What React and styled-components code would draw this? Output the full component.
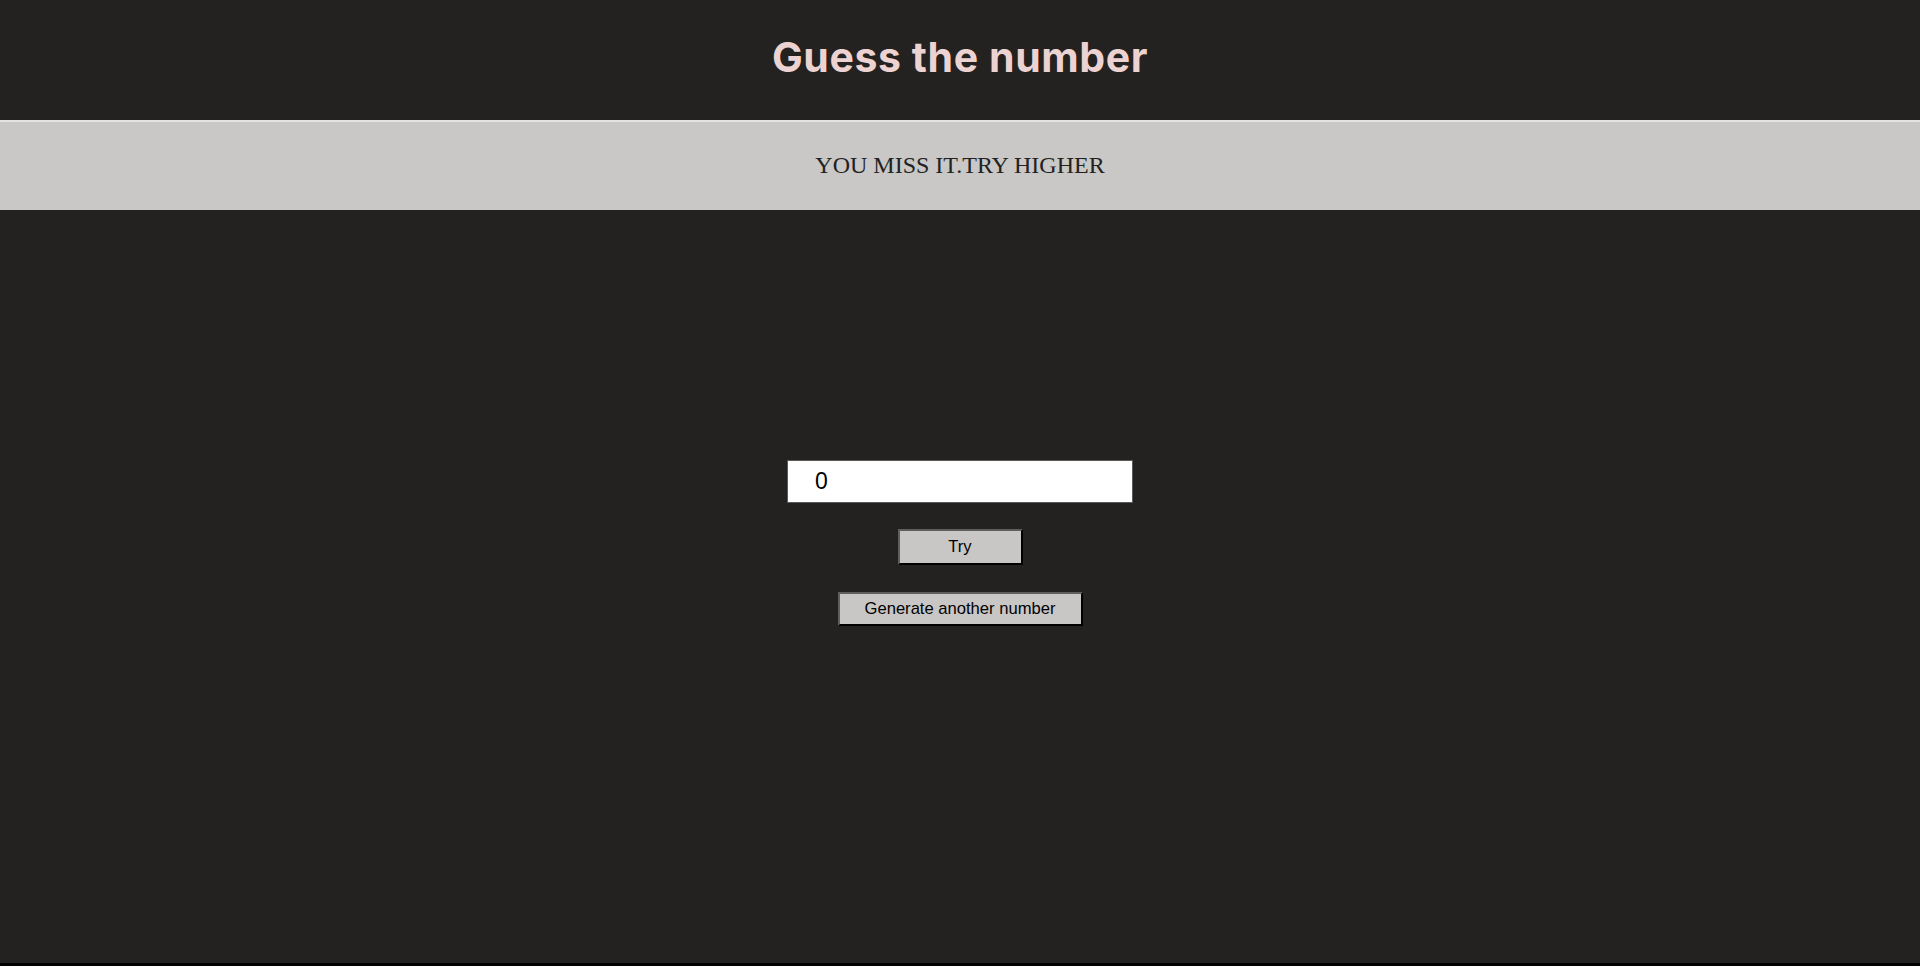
import React, { useState } from "react";
import styled, { createGlobalStyle } from "styled-components";

const GlobalStyle = createGlobalStyle`
  html, body {
    margin: 0;
    padding: 0;
    background: #000;
  }
`;

const App = () => {
  const [value, setValue] = useState("0");

  return (
    <>
      <GlobalStyle />
      <Page>
        <Header>
          <Title>Guess the number</Title>
        </Header>
        <Banner>YOU MISS IT.TRY HIGHER</Banner>
        <Main>
          <Form onSubmit={e => e.preventDefault()}>
            <NumberInput
              type="text"
              value={value}
              onChange={e => setValue(e.target.value)}
            />
            <Button type="submit" width={125} height={36}>
              Try
            </Button>
            <Button type="button" width={245} height={34} offset={1}>
              Generate another number
            </Button>
          </Form>
        </Main>
      </Page>
    </>
  );
};

export default App;

const Page = styled.div`
  display: flex;
  flex-direction: column;
  height: 963px;
  background: #232220;
`;

const Header = styled.header`
  display: flex;
  align-items: center;
  justify-content: center;
  height: 120px;
`;

const Title = styled.h1`
  margin: 0;
  padding-bottom: 6px;
  font-family: "Inter", "Noto Sans", sans-serif;
  font-weight: 700;
  font-size: 41px;
  letter-spacing: 0.6px;
  color: #ecd3d1;
`;

const Banner = styled.div`
  display: flex;
  align-items: center;
  justify-content: center;
  box-sizing: border-box;
  height: 90px;
  padding-bottom: 2px;
  border-top: 2px solid #e4e3e1;
  background: #c9c8c6;
  font-family: "Liberation Serif", "Times New Roman", serif;
  font-size: 24px;
  color: #222;
`;

const Main = styled.main`
  flex: 1;
  display: flex;
  justify-content: center;
  padding-top: 250px;
`;

const Form = styled.form`
  display: flex;
  flex-direction: column;
  align-items: center;
  gap: 26px;
`;

const NumberInput = styled.input`
  box-sizing: border-box;
  width: 346px;
  height: 43px;
  padding: 0 0 0 27px;
  border: 1px solid #5a5a5a;
  background: #fff;
  font-family: "Liberation Sans", Arial, sans-serif;
  font-size: 23px;
  color: #000;
  outline: none;
`;

const Button = styled.button`
  box-sizing: border-box;
  width: ${props => props.width}px;
  height: ${props => props.height}px;
  margin-top: ${props => props.offset || 0}px;
  padding: 0;
  border: 2px solid;
  border-color: #5e5e5e #000 #000 #5e5e5e;
  background: #c8c7c5;
  font-family: "Liberation Sans", Arial, sans-serif;
  font-size: 16.6px;
  color: #000;
  cursor: pointer;
`;
